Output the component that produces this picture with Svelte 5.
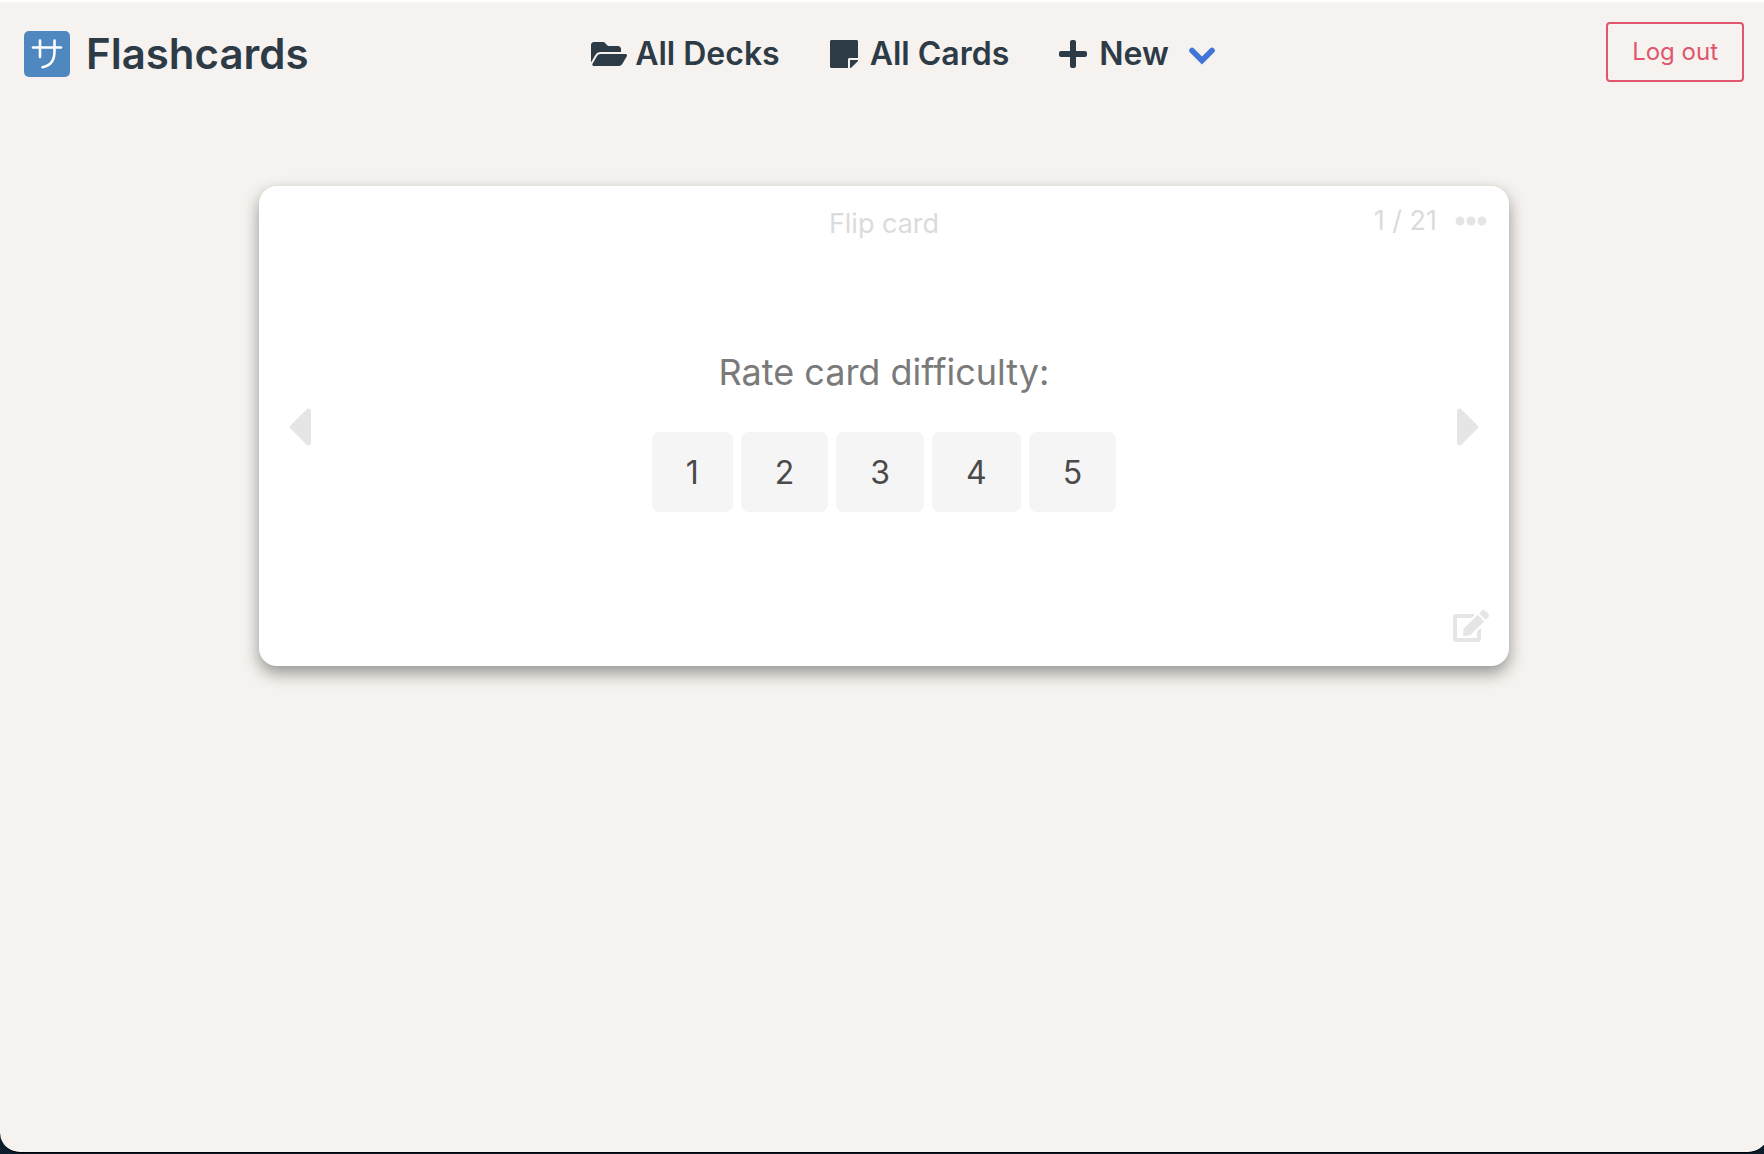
<script>
  const ratings = [1, 2, 3, 4, 5];
  const total = 21;
  let current = $state(1);

  function previous() {
    if (current > 1) current -= 1;
  }

  function next() {
    if (current < total) current += 1;
  }
</script>

<div class="viewport">
  <div class="window">
    <header class="navbar">
      <a class="brand" href="#home">
        <svg class="logo" viewBox="0 0 46 46" aria-hidden="true">
          <rect width="46" height="46" rx="5" fill="#4f88c0" />
          <g fill="none" stroke="#fff" stroke-width="2.6" stroke-linecap="round">
            <path d="M9 16.5H37M16 9.5V26M30.500 9.500V20C30.500 29 27.500 34 18.500 36.200" />
          </g>
        </svg>
        <span>Flashcards</span>
      </a>

      <nav class="menu" aria-label="Main">
        <a class="item" href="#decks">
          <svg class="folder" viewBox="0 0 576 512" aria-hidden="true"><path d="M572.694 292.093L500.27 416.248A63.997 63.997 0 0 1 444.989 448H45.025c-18.523 0-30.064-20.093-20.731-36.093l72.424-124.155A64 64 0 0 1 152 256h399.964c18.523 0 30.064 20.093 20.73 36.093zM152 224h328v-48c0-26.51-21.49-48-48-48H272l-64-64H48C21.49 64 0 85.490 0 112v278.046l69.077-118.418C86.214 242.250 117.989 224 152 224z" /></svg>
          All Decks
        </a>
        <a class="item note-item" href="#cards">
          <svg class="glyph" viewBox="0 0 448 512" aria-hidden="true"><path d="M312 320h136V56c0-13.300-10.700-24-24-24H24C10.700 32 0 42.700 0 56v400c0 13.300 10.700 24 24 24h264V344c0-13.200 10.800-24 24-24zm129 55l-98 98c-4.500 4.500-10.600 7-17 7h-6V352h128v6.100c0 6.300-2.500 12.400-7 16.900z" /></svg>
          All Cards
        </a>
        <button class="item note-item" type="button" aria-haspopup="true">
          <svg class="glyph" viewBox="0 0 448 512" aria-hidden="true"><path d="M416 208H272V64c0-17.670-14.330-32-32-32h-32c-17.670 0-32 14.330-32 32v144H32c-17.670 0-32 14.330-32 32v32c0 17.670 14.330 32 32 32h144v144c0 17.670 14.330 32 32 32h32c17.670 0 32-14.330 32-32V304h144c17.670 0 32-14.330 32-32v-32c0-17.670-14.330-32-32-32z" /></svg>
          New
          <svg class="chevron" viewBox="0 0 26 18" aria-hidden="true"><path d="M3 3.500L13 13.500L23 3.500" fill="none" stroke="#4175d8" stroke-width="5.600" stroke-linecap="round" /></svg>
        </button>
      </nav>

      <button class="logout" type="button">Log out</button>
    </header>

    <main>
      <section class="card" aria-label="Flashcard">
        <div class="top">
          <button class="flip" type="button">Flip card</button>
          <div class="status">
            <span>{current} / {total}</span>
            <button class="icon" type="button" aria-label="More options">
              <svg width="32" height="32" viewBox="0 0 512 512"><path d="M328 256c0 39.800-32.200 72-72 72s-72-32.200-72-72 32.200-72 72-72 72 32.200 72 72zm104-72c-39.800 0-72 32.200-72 72s32.200 72 72 72 72-32.200 72-72-32.200-72-72-72zm-352 0c-39.800 0-72 32.200-72 72s32.200 72 72 72 72-32.200 72-72-32.200-72-72-72z" /></svg>
            </button>
          </div>
        </div>

        <div class="middle">
          <button class="icon" type="button" aria-label="Previous card" onclick={previous}>
            <svg width="24" height="64" viewBox="0 0 192 512"><path d="M192 127.338v257.324c0 17.818-21.543 26.741-34.142 14.142L29.196 270.142c-7.810-7.810-7.810-20.474 0-28.284l128.662-128.662c12.599-12.600 34.142-3.676 34.142 14.142z" /></svg>
          </button>
          <div class="rate">
            <h1 id="rate-title">Rate card difficulty:</h1>
            <div class="ratings" role="group" aria-labelledby="rate-title">
              {#each ratings as rating}
                <button type="button" onclick={next}>{rating}</button>
              {/each}
            </div>
          </div>
          <button class="icon" type="button" aria-label="Next card" onclick={next}>
            <svg width="24" height="64" viewBox="0 0 192 512"><path d="M0 384.662V127.338c0-17.818 21.543-26.741 34.142-14.142l128.662 128.662c7.810 7.810 7.810 20.474 0 28.284L34.142 398.804C21.543 411.404 0 402.480 0 384.662z" /></svg>
          </button>
        </div>

        <div class="bottom">
          <button class="icon" type="button" aria-label="Edit card">
            <svg width="36" height="32" viewBox="0 0 576 512"><path d="M402.600 83.200l90.200 90.200c3.800 3.800 3.800 10 0 13.800L274.400 405.600l-92.800 10.300c-12.400 1.400-22.900-9.100-21.500-21.500l10.300-92.800L388.800 83.200c3.800-3.800 10-3.800 13.800 0zm162-22.900l-48.800-48.800c-15.200-15.200-39.900-15.200-55.200 0l-35.400 35.400c-3.800 3.800-3.800 10 0 13.800l90.200 90.200c3.800 3.800 10 3.800 13.800 0l35.400-35.400c15.200-15.300 15.200-40 0-55.200zM384 346.200V448H64V128h229.800c3.200 0 6.200-1.300 8.500-3.500l40-40c7.600-7.600 2.200-20.500-8.500-20.500H48C21.500 64 0 85.500 0 112v352c0 26.500 21.500 48 48 48h352c26.500 0 48-21.500 48-48V306.200c0-10.700-12.900-16-20.500-8.500l-40 40c-2.200 2.300-3.500 5.300-3.500 8.500z" /></svg>
          </button>
        </div>
      </section>
    </main>
  </div>
</div>

<style>
  :global(body) {
    background: #0b1c2c;
  }

  .viewport {
    box-sizing: border-box;
    min-height: 100vh;
    padding-bottom: 1px;
    overflow: hidden;
    display: flex;
    font-family: Inter, "Liberation Sans", sans-serif;
  }

  /* The window runs slightly past the right edge of the screen. */
  .window {
    box-sizing: border-box;
    flex: 1;
    margin-right: -4px;
    border-top: 2px solid #fff;
    border-bottom: 1px solid #000;
    border-radius: 0 0 20px 20px;
    background: #f6f2ef;
    color: #2d3b47;
  }

  button {
    margin: 0;
    padding: 0;
    border: 0;
    background: none;
    font: inherit;
    color: inherit;
    cursor: pointer;
  }

  svg {
    display: block;
    flex: none;
    fill: currentColor;
  }

  .navbar {
    display: grid;
    grid-template-columns: 1fr auto 1fr;
    align-items: center;
    height: 104px;
    padding: 0 24px;
  }

  .brand {
    display: flex;
    align-items: center;
    gap: 16px;
    color: inherit;
    font-size: 42px;
    font-weight: 600;
    line-height: 48px;
    text-decoration: none;
  }

  .logo {
    width: 46px;
    height: 46px;
  }

  .menu {
    display: flex;
    align-items: center;
    gap: 50px;
    padding-left: 38px;
  }

  .item {
    display: flex;
    align-items: center;
    gap: 8px;
    color: inherit;
    font-size: 32px;
    font-weight: 600;
    line-height: 40px;
    text-decoration: none;
    white-space: nowrap;
  }

  .note-item {
    gap: 12px;
  }

  .folder {
    width: 36px;
    height: 32px;
  }

  .glyph {
    width: 28px;
    height: 32px;
  }

  .chevron {
    width: 26px;
    height: 18px;
    margin-left: 8px;
    padding-top: 4px;
  }

  .logout {
    justify-self: end;
    margin-bottom: 4px;
    padding: 12px 24px;
    border: 2px solid #e0566d;
    border-radius: 4px;
    color: #e0566d;
    font-size: 24px;
    line-height: 32px;
  }

  main {
    padding: 80px 24px;
  }

  .card {
    box-sizing: border-box;
    display: flex;
    flex-direction: column;
    justify-content: space-between;
    max-width: 1250px;
    min-height: 480px;
    margin: 0 auto;
    padding: 16px 20px 24px;
    border-radius: 18px;
    background: #fff;
    box-shadow: 0 7px 16px rgba(10, 18, 12, 0.42);
  }

  .top {
    display: grid;
    grid-template-columns: 1fr auto 1fr;
    align-items: start;
    color: #dbdbdb;
    font-size: 27px;
    line-height: 38px;
  }

  .flip {
    grid-column: 2;
    margin-top: 2px;
    line-height: 40px;
  }

  .status {
    justify-self: end;
    display: flex;
    align-items: center;
    gap: 18px;
    padding-right: 2px;
  }

  .icon {
    color: #e5e5e5;
  }

  .middle {
    display: flex;
    align-items: center;
    justify-content: space-between;
    padding: 0 8px;
  }

  .rate {
    display: flex;
    flex-direction: column;
    align-items: center;
    gap: 36px;
    padding-top: 6px;
  }

  h1 {
    margin: 0;
    color: #7a7a7a;
    font-size: 36px;
    font-weight: 400;
    line-height: 48px;
  }

  .ratings {
    display: flex;
    gap: 8px;
  }

  .ratings button {
    padding: 21px 34px 19px;
    border-radius: 8px;
    background: #f5f5f5;
    color: #4a4a4a;
    font-size: 32px;
    line-height: 40px;
  }

  .bottom {
    display: flex;
    justify-content: flex-end;
  }
</style>
